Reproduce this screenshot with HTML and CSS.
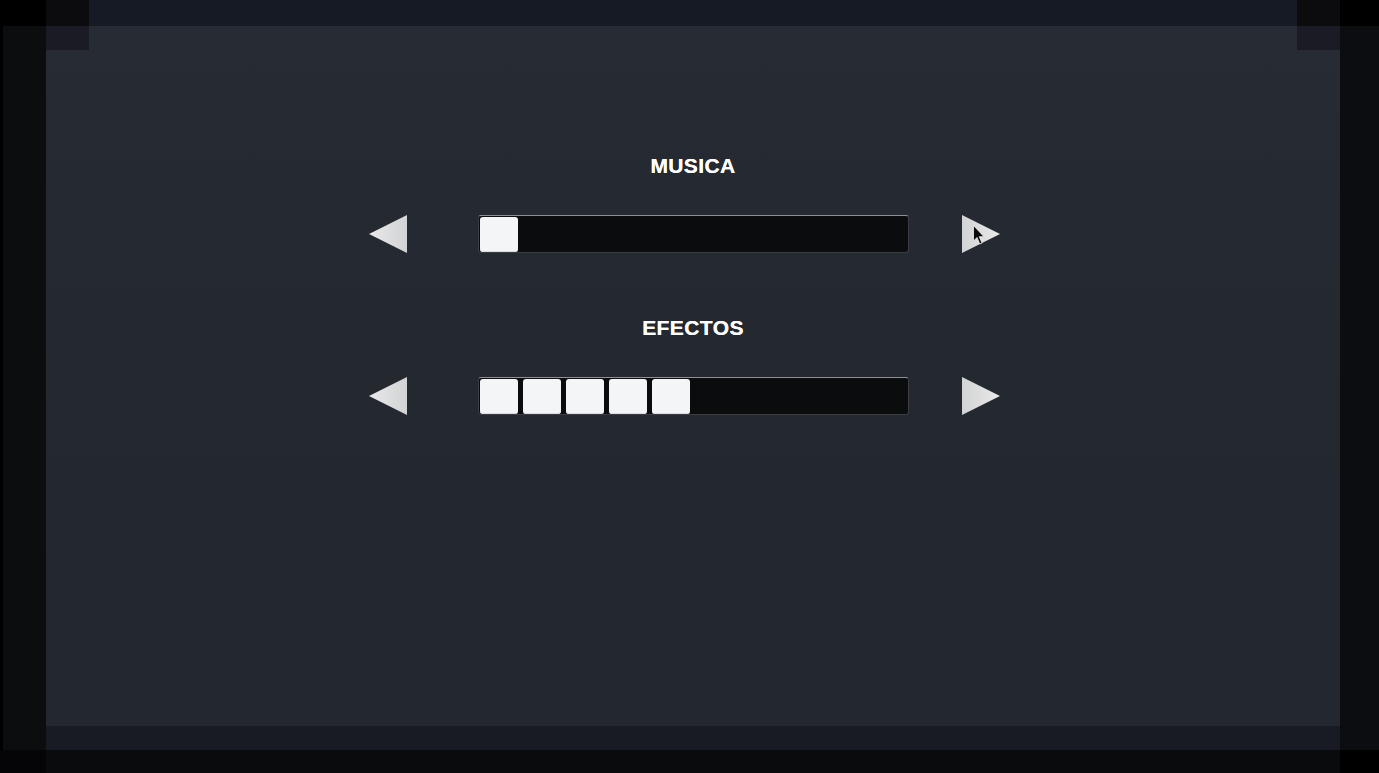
FILE: index.html
```html
<!DOCTYPE html>
<html lang="es">
<head>
<meta charset="utf-8">
<title>Opciones de sonido</title>
<link rel="stylesheet" href="styles.css">
</head>
<body>
<div class="screen">
  <div class="cell c-top-l"></div>
  <div class="cell c-top-m"></div>
  <div class="cell c-top-r"></div>

  <div class="cell c-side-l"></div>
  <main class="cell panel">
    <section class="setting">
      <div class="label">MUSICA</div>
      <div class="control">
        <div class="arrow arrow-left">
          <svg width="38" height="38" viewBox="0 0 38 38"><defs><linearGradient id="gl" x1="0" y1="0" x2="1" y2="0"><stop offset="0" stop-color="#e9e9ea"/><stop offset="1" stop-color="#d2d3d4"/></linearGradient></defs><polygon points="0,19 38,0 38,38" fill="url(#gl)"/></svg>
        </div>
        <div class="bar">
          <div class="block"></div>
        </div>
        <div class="arrow arrow-right">
          <svg width="38" height="38" viewBox="0 0 38 38"><defs><linearGradient id="gr" x1="0" y1="0" x2="1" y2="0"><stop offset="0" stop-color="#d2d3d4"/><stop offset="1" stop-color="#e9e9ea"/></linearGradient></defs><polygon points="0,0 38,19 0,38" fill="url(#gr)"/></svg>
          <svg class="pointer" width="13" height="20" viewBox="0 0 13 20"><path d="M0.5 0.5 L0.5 16 L4 12.5 L6.8 19 L9 18 L6.3 11.7 L11 11.7 Z" fill="#0a0a0a" stroke="#f2f2f2" stroke-width="0.8"/></svg>
        </div>
      </div>
    </section>

    <section class="setting">
      <div class="label">EFECTOS</div>
      <div class="control">
        <div class="arrow arrow-left">
          <svg width="38" height="38" viewBox="0 0 38 38"><polygon points="0,19 38,0 38,38" fill="url(#gl)"/></svg>
        </div>
        <div class="bar">
          <div class="block"></div>
          <div class="block"></div>
          <div class="block"></div>
          <div class="block"></div>
          <div class="block"></div>
        </div>
        <div class="arrow arrow-right">
          <svg width="38" height="38" viewBox="0 0 38 38"><polygon points="0,0 38,19 0,38" fill="url(#gr)"/></svg>
        </div>
      </div>
    </section>
  </main>
  <div class="cell c-side-r"></div>

  <div class="cell c-foot-m"></div>

  <div class="cell c-base-l"></div>
  <div class="cell c-base-m"></div>
  <div class="cell c-base-r"></div>

  <div class="corner corner-l"></div>
  <div class="corner corner-r"></div>
</div>
</body>
</html>
```

FILE: styles.css
```css
html, body {
  margin: 0;
  padding: 0;
  background: #000;
}

body {
  font-family: "Liberation Sans", Arial, sans-serif;
  overflow: hidden;
}

.screen {
  width: 1379px;
  height: 773px;
  display: grid;
  grid-template-columns: 46px 1294px 39px;
  grid-template-rows: 26px 700px 24px 23px;
}

.c-top-l { grid-column: 1; grid-row: 1; background: #000; }
.c-top-m { grid-column: 2; grid-row: 1; background: #161a24; }
.c-top-r { grid-column: 3; grid-row: 1; background: #000; }

.c-side-l {
  grid-column: 1;
  grid-row: 2 / 4;
  background: #0c0d0f;
  border-left: 3px solid #000;
}
.c-side-r {
  grid-column: 3;
  grid-row: 2 / 4;
  background: #0c0d10;
}

.c-foot-m {
  grid-column: 2;
  grid-row: 3;
  background: #181a24;
}

.c-base-l { grid-column: 1; grid-row: 4; background: #050507; }
.c-base-m { grid-column: 2; grid-row: 4; background: #0a0b0d; }
.c-base-r { grid-column: 3; grid-row: 4; background: #000; }

.corner {
  grid-row: 1 / 3;
  grid-column: 2;
  align-self: start;
  width: 43px;
  height: 50px;
  background: linear-gradient(to bottom, #0c0c0f 0, #0c0c0f 26px, #1b1b26 26px, #1b1b26 50px);
}
.corner-l { justify-self: start; }
.corner-r { justify-self: end; }

.panel {
  grid-column: 2;
  grid-row: 2;
  background: linear-gradient(to bottom, #262b34 0%, #242930 50%, #222730 100%);
  display: flex;
  flex-direction: column;
  align-items: center;
  padding-top: 128px;
  box-sizing: border-box;
}

.setting {
  display: flex;
  flex-direction: column;
  align-items: center;
}
.setting + .setting {
  margin-top: 63px;
}

.label {
  color: #fff;
  font-weight: bold;
  font-size: 21px;
  line-height: 24px;
  letter-spacing: 0.4px;
  height: 24px;
  text-shadow: 0 0 0.6px #fff;
}

.control {
  margin-top: 37px;
  display: grid;
  grid-template-columns: 109px 431px 109px;
  align-items: center;
  height: 38px;
}

.arrow {
  width: 38px;
  height: 38px;
  position: relative;
}
.arrow svg { display: block; }
.arrow-left { justify-self: start; }
.arrow-right { justify-self: start; margin-left: 53px; }

.pointer {
  position: absolute;
  left: 11px;
  top: 10px;
}

.bar {
  box-sizing: border-box;
  height: 38px;
  background: #0b0c0e;
  border: 1px solid #3a3d42;
  border-top-color: #8d9095;
  border-radius: 3px;
  padding: 0 1px;
  display: flex;
  align-items: center;
  gap: 5.2px;
}

.block {
  width: 38px;
  height: 35px;
  background: #f4f5f7;
  border-radius: 3px;
  box-shadow: inset 0 -1px 0 #d9dadd;
}
```
